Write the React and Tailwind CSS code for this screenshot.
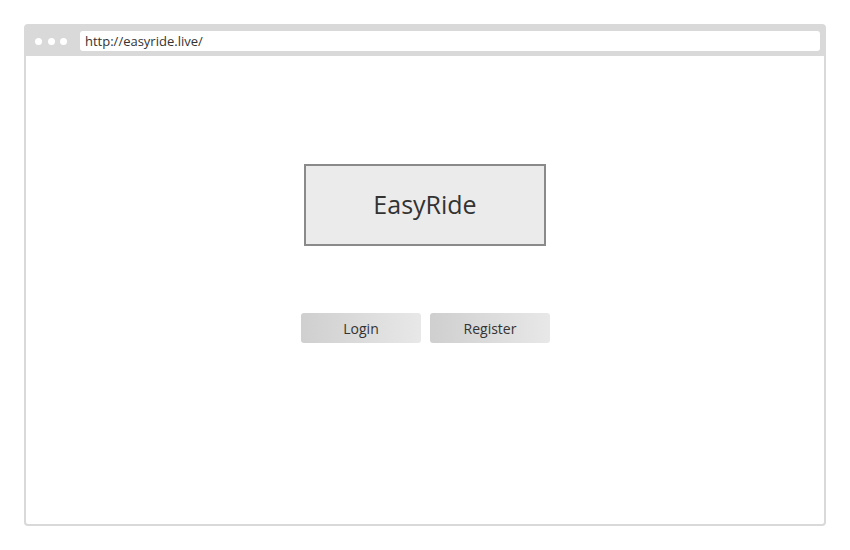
const App = () => {
  return (
    <div className="w-[850px] h-[550px] bg-white p-[24px]" style={{ fontFamily: '"Open Sans", "Noto Sans", sans-serif' }}>
      <div className="w-full h-full border-2 border-[#d9d9d9] rounded-[4px] flex flex-col">
        {/* browser bar */}
        <div className="h-[30px] bg-[#d9d9d9] flex items-center pl-[9px] pr-[4px] gap-[5px]">
          <div className="flex gap-[5.5px] w-[40px]">
            <span className="w-[7px] h-[7px] rounded-full bg-white"></span>
            <span className="w-[7px] h-[7px] rounded-full bg-white"></span>
            <span className="w-[7px] h-[7px] rounded-full bg-white"></span>
          </div>
          <div className="flex-1 h-[20px] bg-white rounded-[3px] flex items-center px-[5px] text-[13px] text-[#333] leading-none">
            http://easyride.live/
          </div>
        </div>

        {/* content */}
        <div className="flex-1 flex flex-col items-center pt-[108px]">
          <div className="w-[242px] h-[82px] border-2 border-[#8a8a8a] bg-[#ebebeb] flex items-center justify-center text-[25px] text-[#333]">
            EasyRide
          </div>
          <div className="flex gap-[9px] mt-[67px] pl-[1px]">
            <button className="w-[120px] h-[30px] rounded-[3px] bg-gradient-to-r from-[#cfcfcf] to-[#e8e8e8] text-[14px] text-[#333]">
              Login
            </button>
            <button className="w-[120px] h-[30px] rounded-[3px] bg-gradient-to-r from-[#cfcfcf] to-[#e8e8e8] text-[14px] text-[#333]">
              Register
            </button>
          </div>
        </div>
      </div>
    </div>
  );
};

export default App;
